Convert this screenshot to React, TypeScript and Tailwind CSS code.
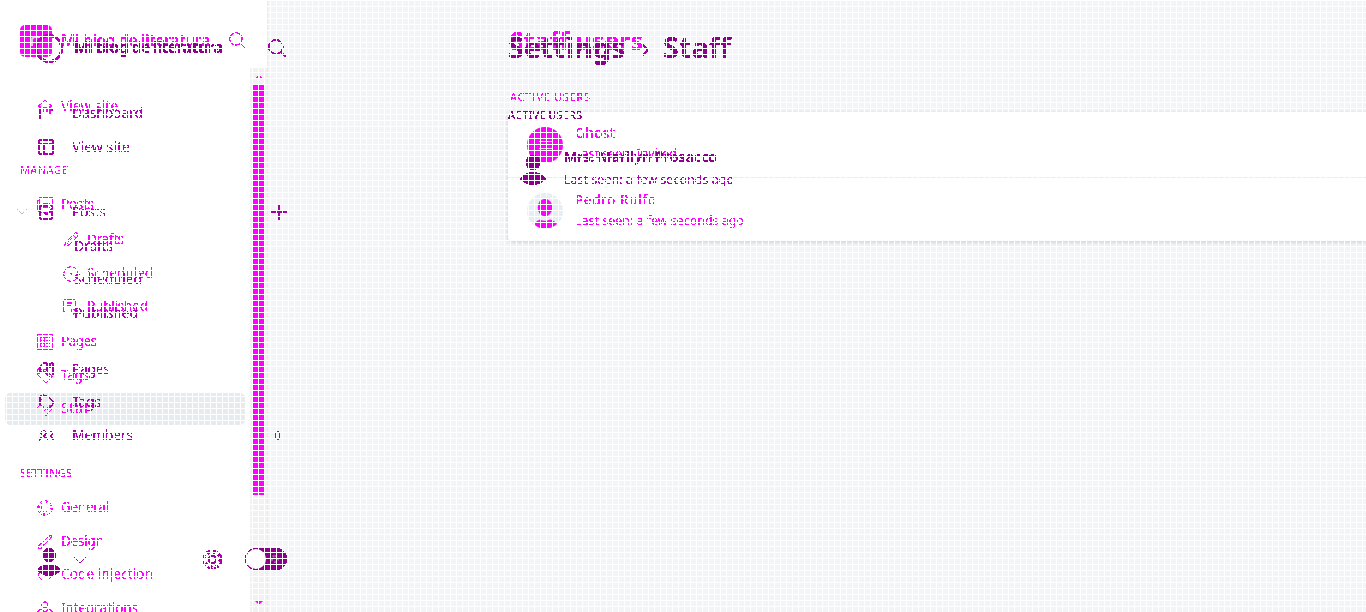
import React from "react";

type TProps = { w: number; size: number; children: string; weight?: number; tone?: "old" | "new" | "soft"; className?: string };

function T({ w, size, children, weight = 400, tone = "old", className = "" }: TProps) {
  const y = Math.round(size * 1.05);
  const fill = tone === "old" ? "fill-[#ff00ff]" : tone === "soft" ? "fill-[#ac00b4]" : "fill-[#8b008b]";
  return (
    <svg width={w + 4} height={Math.round(size * 1.5)} className={`block shrink-0 overflow-visible ${fill} ${className}`}>
      <text x="0" y={y} fontSize={size} fontWeight={weight} textLength={w} lengthAdjust="spacing" fontFamily='"Noto Sans", "Open Sans", sans-serif'>
        {children}
      </text>
    </svg>
  );
}

const paths: Record<string, React.ReactNode> = {
  home: <path d="M0.5 8L8 0.8L15.5 8M3 6.5V15M6 13V9H10V13M13 15V6.5" />,
  posts: <path d="M2.5.5H15.5V15.5H2.5ZM2.5 3.5H.5V13.5L2.5 15M5.5 6.5H12.5M5.5 10.5H12.5" />,
  pen: <path d="M1 15L3 10L11.5 1.2Q13 0 14.5 1.5Q16 3 14.5 4.5L6 13ZM3 10L6 13M10 3L13 6M5 10L10 5" />,
  clock: <g><circle cx="8" cy="8" r="7.2" strokeDasharray="5 0.8" /><path d="M8 7V8H9" /></g>,
  published: <path d="M12.5 8V2Q12.5.5 11 .5H2Q.5.5.5 2V11Q.5 13.5 3 13.5H7M4 4H10M4 7H8M8 10L15 12L12 13.5L10 15.5Z" />,
  pages: <path d="M.5.5H15.5V15.5H.5ZM3.5 3.5H12.5M3.5 6.5H7.5M3.5 9.5H7.5M3.5 12.5H7.5M9.5 6.5H12.5M9.5 9.5H12.5M9.5 12.5H12.5M3.5 3.5V12.5M7.5 3.5V12.5" />,
  tag: <path d="M.5 6.5V1L3 .8L15.5 8L9 15.3L.5 6.5L8 1L15 8" />,
  staff: <path d="M.5 7Q3 2 5.5 5L8 8M7 13L9 15L15.5 7M7 10L13 4M10 9L14 4" />,
  gear: <g><circle cx="8" cy="8" r="7.2" strokeDasharray="4 1.65" /><circle cx="8" cy="8" r="5.8" strokeDasharray="1.5 3.05" /><path d="M4.5 6V9M11.5 6V9M6 11.5H7M9 11.5H10" /></g>,
  newgear: <g><circle cx="8" cy="8" r="6.9" strokeDasharray="4 1.42" /><circle cx="8" cy="8" r="5.4" strokeDasharray="1.6 2.64" /><circle cx="8" cy="8" r="2.8" /></g>,
  brush: <path d="M15 .7Q13 .5 5 9L7 11Q15 4 15 .7ZM5 9Q1 10 1 15Q6 15 7 11" />,
  code: <path d="M5 3L.7 8L5 13M11 3L15.3 8L11 13" />,
  integrations: <path d="M8 .7L11 2.5V5.5L8 7L5 5.5V2.5ZM4 8L7 10V13L4 15L1 13V10ZM12 8L15 10V13L12 15L9 13V10Z" />,
  search: <g><circle cx="7" cy="7" r="6.2" /><path d="M11.5 11.5L15.5 15.5" /></g>,
  flag: <path d="M2 14V3.5H14V6" />,
  layout: <path d="M1 1H15V15H1ZM1 5H15M6 5V15" />,
  edit: <path d="M10 2H2V15H14V6M7 8V10H10L15 3L12 1" />,
  copy: <path d="M2 10V5L5 1H9V9L13 13M13 1H15V13M2 10H6L12 15M12 1V6" />,
  newtag: <path d="M2 11V2L5 .8L9 2L15 7V10L11 15M4 5V6" />,
  members: <path d="M1.5 14Q2 10 5.5 9.5Q9 10 9.5 13M12 9.5Q15 10 15 13M5.5 3.5A2.5 2.5 0 1 0 5.6 8.5A2.5 2.5 0 1 0 5.5 3.5M12 4.5Q15 5 14 8L12 9" />,
  chevron: <path d="M2 5L8 11L14 5" />,
  plus: <path d="M8 0V16M0 8H16" />,
};

function Icon({ name, tone = "old", size = 16, sw = 1, className = "" }: { name: string; tone?: "old" | "new"; size?: number; sw?: number; className?: string }) {
  return (
    <svg viewBox="0 0 16 16" width={size} height={size} strokeWidth={sw} className={`block shrink-0 fill-none ${tone === "old" ? "stroke-[#ff00ff]" : "stroke-[#a500a5]"} ${className}`}>
      {paths[name]}
    </svg>
  );
}

function Row({ icon, label, w, h, sub = false }: { icon: string; label: string; w: number; h: number; sub?: boolean }) {
  return (
    <div className={`flex shrink-0 items-center gap-[8px] ${sub ? "pl-[63px]" : "pl-[37px]"}`} style={{ height: h }}>
      <Icon name={icon} />
      <T w={w} size={13.5}>{label}</T>
    </div>
  );
}

function NewRow({ icon, label, w, h }: { icon?: string; label: string; w: number; h: number }) {
  return (
    <div className={`flex shrink-0 items-center gap-[18px] ${icon ? "pl-[38px]" : "pl-[74px]"}`} style={{ height: h }}>
      {icon && <Icon name={icon} tone="new" sw={1.1} />}
      <T w={w} size={14} tone="soft">{label}</T>
    </div>
  );
}

function OldPerson() {
  return (
    <svg width="36" height="36" viewBox="0 0 36 36" className="fill-[#ff00ff]">
      <circle cx="18" cy="18" r="18" className="fill-[#e5eef4]" />
      <ellipse cx="18" cy="14.5" rx="7.3" ry="8.8" />
      <path d="M7 31Q10 27 13 26.5Q18 29 23 26.5Q27 27 30 31Q25 35.5 18 35.5Q11 35.5 7 31Z" />
    </svg>
  );
}

function NewPerson({ w, h }: { w: number; h: number }) {
  return (
    <svg width={w} height={h} viewBox="0 0 26 30" preserveAspectRatio="none" className="block shrink-0 fill-[#8b008b]">
      <ellipse cx="13" cy="7.5" rx="7.5" ry="7.5" />
      <path d="M0 24Q4 18 10 17.5H16Q22 18 26 24Q20 30 13 30Q6 30 0 24Z" />
    </svg>
  );
}

export default function App() {
  return (
    <div className="relative h-[612px] w-[1366px] overflow-hidden bg-[#f2f4f7]">
      <svg width="0" height="0" className="absolute">
        <filter id="crisp" x="0" y="0" width="100%" height="100%">
          <feComponentTransfer><feFuncA type="discrete" tableValues="0 0 1 1 1" /></feComponentTransfer>
        </filter>
      </svg>

      <div className="flex h-full">
        <aside className="flex h-full w-[267px] shrink-0 flex-col bg-white">
          <header className="flex h-[68px] shrink-0 pl-5">
            <div className="mt-[25px] grid h-8 w-8 place-items-center rounded-[5px] bg-[#ff00ff]">
              <div className="h-[10px] w-[10px] rounded-tl-[4px] border-l-2 border-t-2 border-[#e8c8e8]" />
            </div>
            <T w={149} size={15.5} weight={600} className="ml-[9px] mt-[30px] [filter:url(#crisp)]">Mi blog de literatura</T>
            <Icon name="search" className="ml-[15px] mt-[32px] [filter:url(#crisp)]" />
          </header>
          <div className="flex min-h-0 flex-1">
            <nav className="relative flex w-[250px] flex-col overflow-hidden">
              <div className="absolute left-[5px] top-[325px] h-8 w-[240px] rounded-[5px] bg-[#e6ebf0]" />
              <div className="relative flex flex-col pt-[22px] [filter:url(#crisp)]">
                <Row icon="home" label="View site" w={57} h={34} />
                <div className="flex h-[63px] shrink-0 pl-[20px] pt-[38px]"><T w={48} size={11}>MANAGE</T></div>
                <Row icon="posts" label="Posts" w={33} h={36} />
                <Row sub icon="pen" label="Drafts" w={37} h={34} />
                <Row sub icon="clock" label="Scheduled" w={66} h={34} />
                <Row sub icon="published" label="Published" w={61} h={32} />
                <Row icon="pages" label="Pages" w={36} h={38} />
                <Row icon="tag" label="Tags" w={28} h={30} />
                <Row icon="staff" label="Staff" w={32} h={36} />
                <div className="flex h-[63px] shrink-0 pl-[20px] pt-[38px]"><T w={52} size={11}>SETTINGS</T></div>
                <Row icon="gear" label="General" w={48} h={36} />
                <Row icon="brush" label="Design" w={43} h={32} />
                <Row icon="code" label="Code injection" w={92} h={34} />
                <Row icon="integrations" label="Integrations" w={77} h={34} />
              </div>
            </nav>
            <div className="flex w-[17px] flex-col items-center bg-[#f1f1f1]">
              <svg width="6" height="2" className="mt-[8px] fill-[#ff00ff]"><path d="M1 0h1v1H1zM4 0h1v1H4zM0 1h2v1H0zM4 1h2v1H4z" /></svg>
              <div className="mt-[7px] h-[410px] w-[11px] bg-[#ff00ff]" />
              <svg width="8" height="3" className="mt-[106px] fill-[#ff00ff]"><path d="M0 0H8L5 3H3Z" /></svg>
            </div>
          </div>
        </aside>

        <main className="flex min-w-0 flex-1 flex-col border-l border-[#e8eaed] pl-[240px]">
          <div className="flex h-[112px] shrink-0 flex-col pl-[2px] pt-[24px] [filter:url(#crisp)]">
            <T w={133} size={25} weight={700}>Staff users</T>
            <T w={80} size={11} className="mt-[27px]">ACTIVE USERS</T>
          </div>
          <section className="flex h-[129px] w-full flex-col rounded-l-[4px] bg-white shadow-[0_1px_4px_#c5ccd3]">
            <div className="flex h-[66px] border-b border-[#e9edf1] pl-[19px]">
              <div className="mt-[15px] grid h-9 w-9 place-items-center rounded-full bg-[#ff00ff]"><div className="h-[8px] w-[13px] border-y border-[#ffd0ff]" /></div>
              <div className="ml-[12px] mt-[12px] flex flex-col gap-px [filter:url(#crisp)]">
                <T w={40} size={13.5} weight={500}>Ghost</T>
                <T w={102} size={12.5}>Last seen: Invited</T>
              </div>
            </div>
            <div className="flex h-[63px] pl-[19px]">
              <div className="mt-[15px]"><OldPerson /></div>
              <div className="ml-[12px] mt-[13px] flex flex-col gap-px [filter:url(#crisp)]">
                <T w={81} size={13.5} weight={500}>Pedro Rulfo</T>
                <T w={169} size={12.5}>Last seen: a few seconds ago</T>
              </div>
            </div>
          </section>
        </main>
      </div>

      <div className="absolute inset-0 flex [filter:url(#crisp)]">
        <div className="flex h-full w-[300px] shrink-0 flex-col">
          <div className="flex h-[96px] shrink-0 pl-[35px]">
            <div className="mt-[34px] h-[29px] w-[28px] rounded-full border-[3px] border-[#b800b8]" />
            <T w={149} size={15.5} weight={700} tone="new" className="ml-[11px] mt-[37px]">Mi blog de literatura</T>
            <Icon name="search" tone="new" size={18} sw={1.4} className="ml-[41px] mt-[39px]" />
          </div>
          <NewRow icon="flag" label="Dashboard" w={71} h={34} />
          <NewRow icon="layout" label="View site" w={58} h={34} />
          <div className="h-[31px] shrink-0" />
          <div className="flex h-[34px] shrink-0 items-center pl-[16px]">
            <svg width="12" height="10" className="fill-none stroke-[#b5bab5]"><path d="M1 2L6 7L11 2" /></svg>
            <Icon name="edit" tone="new" className="ml-[10px]" sw={1.1} />
            <T w={34} size={14} tone="soft" className="ml-[18px]">Posts</T>
            <Icon name="plus" tone="new" sw={2} className="ml-[161px]" />
          </div>
          <NewRow label="Drafts" w={39} h={34} />
          <NewRow label="Scheduled" w={68} h={33} />
          <NewRow label="Published" w={64} h={34} />
          <div className="h-[23px] shrink-0" />
          <NewRow icon="copy" label="Pages" w={38} h={33} />
          <NewRow icon="newtag" label="Tags" w={29} h={32} />
          <div className="flex">
            <NewRow icon="members" label="Members" w={61} h={34} />
            <T w={7} size={12} tone="soft" className="ml-[137px] mt-[9px]">0</T>
          </div>
          <div className="flex pl-[37px] pt-[90px]">
            <div className="mt-[6px]"><NewPerson w={24} h={28} /></div>
            <Icon name="chevron" tone="new" className="ml-[11px] mt-[10px]" />
            <Icon name="newgear" tone="new" size={21} sw={1.5} className="ml-[114px] mt-[7px]" />
            <div className="ml-[22px] mt-[6px] flex h-[22px] w-[42px] items-center rounded-full bg-[#8b008b] p-px">
              <div className="h-[20px] w-[20px] rounded-full bg-white" />
              <div className="ml-[5px] h-[8px] w-[8px] rounded-full border-2 border-dotted border-[#b05ab0]" />
            </div>
          </div>
        </div>
        <div className="flex flex-col pl-[208px] pt-[28px]">
          <div className="flex h-[79px]">
            <T w={117} size={28.5} weight={700} tone="new">Settings</T>
            <svg width="8" height="14" className="ml-[12px] mt-[15px] fill-none stroke-[#9b009b]"><path d="M1 1L7 7L1 13" strokeWidth="1.5" /></svg>
            <T w={68} size={28.5} weight={700} tone="new" className="ml-[14px]">Staff</T>
          </div>
          <T w={74} size={11} weight={500} tone="new">ACTIVE USERS</T>
          <div className="flex pl-[12px] pt-[22px]">
            <div className="mt-[9px]"><NewPerson w={26} h={30} /></div>
            <div className="ml-[18px] mt-px flex flex-col gap-[3px]">
              <T w={153} size={14} weight={600} tone="new">Mrs. Marilyn Prosacco</T>
              <T w={170} size={12.5} tone="soft">Last seen: a few seconds ago</T>
            </div>
          </div>
        </div>
      </div>

      <div className="pointer-events-none absolute inset-0 bg-[linear-gradient(to_right,white_1px,transparent_1px),linear-gradient(to_bottom,white_1px,transparent_1px)] bg-[size:6px_6px]" />
    </div>
  );
}
